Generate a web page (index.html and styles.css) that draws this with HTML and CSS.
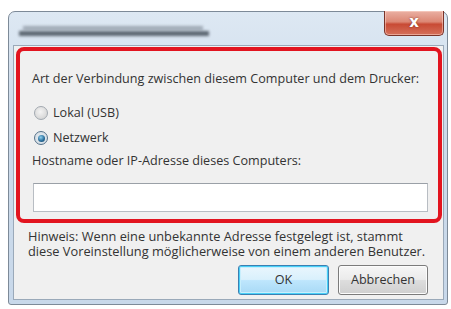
FILE: index.html
```html
<!DOCTYPE html>
<html lang="de">
<head>
<meta charset="utf-8">
<title>Verbindung</title>
<link rel="stylesheet" href="styles.css">
</head>
<body>
<div class="window">
  <div class="titlebar">
    <div class="title-blur"><span class="blur-a"></span><span class="blur-b"></span></div>
    <div class="close-btn"><span class="close-x">x</span></div>
  </div>
  <div class="content">
    <div class="highlight">
      <div class="label first">Art der Verbindung zwischen diesem Computer und dem Drucker:</div>
      <div class="radio-row lokal"><span class="radio"></span><span class="radio-label">Lokal (USB)</span></div>
      <div class="radio-row netz"><span class="radio checked"><span class="dot"></span></span><span class="radio-label">Netzwerk</span></div>
      <div class="label host">Hostname oder IP-Adresse dieses Computers:</div>
      <div class="textbox"></div>
    </div>
    <div class="hint">
      <div class="hint-line">Hinweis: Wenn eine unbekannte Adresse festgelegt ist, stammt</div>
      <div class="hint-line">diese Voreinstellung möglicherweise von einem anderen Benutzer.</div>
    </div>
    <div class="buttons">
      <div class="btn default">OK</div>
      <div class="btn">Abbrechen</div>
    </div>
  </div>
</div>
</body>
</html>
```

FILE: styles.css
```css
html, body {
  margin: 0;
  padding: 0;
  background: #ffffff;
}

body {
  font-family: "Open Sans", "Noto Sans", "Liberation Sans", sans-serif;
  font-size: 12.6px;
  color: #333333;
}

.window {
  margin: 11px 0 0 8px;
  width: 440px;
  height: 294px;
  box-sizing: border-box;
  border: 1px solid #7d8a98;
  border-radius: 7px 7px 3px 3px;
  background: linear-gradient(to bottom, #dde8f3 0%, #cddbea 40%, #c8d8ea 100%);
  display: flex;
  flex-direction: column;
  padding: 0 3px 4px 4px;
}

.titlebar {
  height: 33px;
  display: flex;
  align-items: flex-start;
  justify-content: space-between;
  flex: none;
}

.title-blur {
  margin: 14px 0 0 6px;
  width: 192px;
  height: 12px;
}

.blur-a {
  display: block;
  height: 4px;
  margin-left: 4px;
  width: 180px;
  background: #8f99a4;
  filter: blur(1.6px);
  opacity: 0.8;
}

.blur-b {
  display: block;
  height: 5px;
  margin-top: 1px;
  width: 190px;
  background: #4e5862;
  filter: blur(1.6px);
  opacity: 0.9;
}

.close-btn {
  margin-top: -1px;
  width: 60px;
  height: 25px;
  box-sizing: border-box;
  border: 1px solid #7a3328;
  border-top: none;
  border-radius: 0 0 5px 5px;
  background: linear-gradient(to bottom, #eab0a3 0%, #dc8774 45%, #c84a34 55%, #d5705a 100%);
  display: flex;
  align-items: center;
  justify-content: center;
  box-shadow: inset 0 0 0 1px rgba(255, 220, 210, 0.5);
}

.close-x {
  color: #ffffff;
  font-family: "DejaVu Sans", sans-serif;
  font-weight: bold;
  font-size: 15px;
  line-height: 15px;
  margin-top: -2px;
  text-shadow: 0 0 2px #7a2a1c;
}

.content {
  flex: 1;
  background: #f0f0f0;
  border: 1px solid #9aa9b9;
  display: flex;
  flex-direction: column;
  padding: 1px 1px 0 2px;
}

.highlight {
  border: 4px solid #e2141f;
  border-radius: 8px;
  padding: 20px 12px 7px 12px;
  display: flex;
  flex-direction: column;
}

.label {
  line-height: 16px;
  white-space: nowrap;
}

.radio-row {
  display: flex;
  align-items: center;
  height: 16px;
}

.radio-row.lokal {
  margin-top: 18px;
}

.radio-row.netz {
  margin-top: 9px;
}

.label.host {
  margin-top: 7px;
}

.radio {
  width: 12px;
  height: 12px;
  margin-left: 2px;
  border-radius: 50%;
  border: 1px solid #a2a9b0;
  background: radial-gradient(circle at 45% 40%, #f4f4f4 0%, #d8d8d8 70%, #c6c6c6 100%);
  display: flex;
  align-items: center;
  justify-content: center;
  flex: none;
}

.radio.checked {
  border-color: #56728a;
  background: radial-gradient(circle, #e8eef3 0%, #cfd9e1 100%);
}

.dot {
  width: 7px;
  height: 7px;
  border-radius: 50%;
  background: radial-gradient(circle at 40% 35%, #8fd0ee 0%, #2a6f9d 55%, #153e5e 100%);
}

.radio-label {
  margin-left: 5px;
  line-height: 16px;
}

.textbox {
  margin-top: 14px;
  margin-left: 1px;
  width: 395px;
  height: 29px;
  box-sizing: border-box;
  background: #ffffff;
  border: 1px solid #b8bdc3;
  border-top-color: #9aa0a7;
}

.hint {
  margin: 6px 0 0 12px;
  font-size: 12.8px;
  white-space: nowrap;
}

.hint-line {
  height: 15px;
  line-height: 15px;
}

.buttons {
  display: flex;
  justify-content: flex-end;
  gap: 9px;
  margin: 6px 14px 0 0;
}

.btn {
  width: 90px;
  height: 30px;
  box-sizing: border-box;
  border: 1px solid #7b7b7b;
  border-radius: 3px;
  background: linear-gradient(to bottom, #f6f6f6 0%, #ebebeb 48%, #dddddd 52%, #cfcfcf 100%);
  box-shadow: inset 0 0 0 1px #fcfcfc;
  display: flex;
  align-items: center;
  justify-content: center;
  line-height: 16px;
}

.btn.default {
  width: 91px;
  border-color: #3c7fb1;
  background: linear-gradient(to bottom, #eaf6fd 0%, #d9f0fc 48%, #bee6fd 52%, #a7d9f5 100%);
  box-shadow: inset 0 0 0 1px #48d0f8, inset 0 0 0 2px #c8eefc;
}
```
